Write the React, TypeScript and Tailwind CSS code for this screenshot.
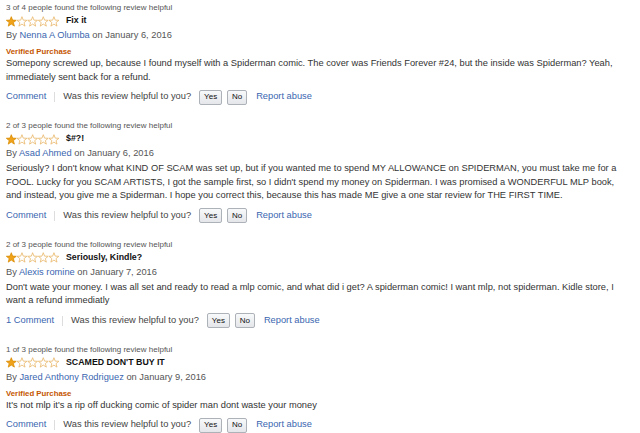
import React from 'react';

type Review = {
    helpful: string;
    title: string;
    author: string;
    date: string;
    verified: boolean;
    body: string;
    comments: string;
};

const reviews: Review[] = [
    {
        helpful: '3 of 4 people found the following review helpful',
        title: 'Fix it',
        author: 'Nenna A Olumba',
        date: 'January 6, 2016',
        verified: true,
        body: 'Somepony screwed up, because I found myself with a Spiderman comic. The cover was Friends Forever #24, but the inside was Spiderman? Yeah, immediately sent back for a refund.',
        comments: 'Comment',
    },
    {
        helpful: '2 of 3 people found the following review helpful',
        title: '$#?!',
        author: 'Asad Ahmed',
        date: 'January 6, 2016',
        verified: false,
        body: "Seriously? I don't know what KIND OF SCAM was set up, but if you wanted me to spend MY ALLOWANCE on SPIDERMAN, you must take me for a FOOL. Lucky for you SCAM ARTISTS, I got the sample first, so I didn't spend my money on Spiderman. I was promised a WONDERFUL MLP book, and instead, you give me a Spiderman. I hope you correct this, because this has made ME give a one star review for THE FIRST TIME.",
        comments: 'Comment',
    },
    {
        helpful: '2 of 3 people found the following review helpful',
        title: 'Seriously, Kindle?',
        author: 'Alexis romine',
        date: 'January 7, 2016',
        verified: false,
        body: "Don't wate your money. I was all set and ready to read a mlp comic, and what did i get? A spiderman comic! I want mlp, not spiderman. Kidle store, I want a refund immediatly",
        comments: '1 Comment',
    },
    {
        helpful: '1 of 3 people found the following review helpful',
        title: "SCAMED DON'T BUY IT",
        author: 'Jared Anthony Rodriguez',
        date: 'January 9, 2016',
        verified: true,
        body: "It's not mlp it's a rip off ducking comic of spider man dont waste your money",
        comments: 'Comment',
    },
];

function starPoints(cx: number, cy: number, ro: number, ri: number) {
    const pts: string[] = [];
    for (let i = 0; i < 10; i++) {
        const r = i % 2 === 0 ? ro : ri;
        const a = (Math.PI / 5) * i - Math.PI / 2;
        pts.push(`${(cx + r * Math.cos(a)).toFixed(2)},${(cy + r * Math.sin(a)).toFixed(2)}`);
    }
    return pts.join(' ');
}

function Stars({ rating }: { rating: number }) {
    return (
        <svg width="54" height="11" viewBox="0 0 54 11" className="shrink-0">
            {[0, 1, 2, 3, 4].map((i) => (
                <polygon
                    key={i}
                    points={starPoints(5.3 + i * 10.66, 5.9, 5.2, 2.2)}
                    fill={i < rating ? '#f0a31a' : '#ffffff'}
                    stroke={i < rating ? '#d98b00' : '#e8b667'}
                    strokeWidth="0.8"
                    strokeLinejoin="round"
                />
            ))}
        </svg>
    );
}

function ReviewItem({ r }: { r: Review }) {
    return (
        <div className="mb-[15px]">
            <div className="text-[8px] leading-[12px] text-[#555]">{r.helpful}</div>
            <div className="flex items-center h-[14px]">
                <Stars rating={1} />
                <span className="ml-[6px] text-[8.8px] font-bold text-[#111]">{r.title}</span>
            </div>
            <div className="text-[9.3px] leading-[14px] text-[#555]">
                By <a href="#" className="text-[#3a66b0]">{r.author}</a> on {r.date}
            </div>
            {r.verified && (
                <div className="mt-[4px] text-[7.8px] leading-[11px] font-bold text-[#c45500]">Verified Purchase</div>
            )}
            <p className={`text-[9.3px] leading-[13.5px] text-[#333] ${r.verified ? '' : 'mt-[2px]'}`}>{r.body}</p>
            <div className="mt-[5px] flex items-center h-[16px] text-[9.3px] text-[#444]">
                <a href="#" className="text-[#3a66b0]">{r.comments}</a>
                <span className="mx-[8px] w-px h-[10px] bg-[#ddd]" />
                <span>Was this review helpful to you?</span>
                <button type="button" className="ml-[8px] h-[15px] w-[23px] text-[8px] text-[#111] border border-[#adb1b8] rounded-[2px] bg-gradient-to-b from-[#f8f9fa] to-[#e4e6ea]">
                    Yes
                </button>
                <button type="button" className="ml-[5px] h-[15px] w-[20px] text-[8px] text-[#111] border border-[#adb1b8] rounded-[2px] bg-gradient-to-b from-[#f8f9fa] to-[#e4e6ea]">
                    No
                </button>
                <a href="#" className="ml-[9px] text-[#3a66b0]">Report abuse</a>
            </div>
        </div>
    );
}

export default function App() {
    return (
        <div className="min-h-screen bg-white pl-[6px] pr-[18px] pt-[2px] font-['Liberation_Sans',Arial,sans-serif]">
            {reviews.map((r, i) => (
                <ReviewItem key={i} r={r} />
            ))}
        </div>
    );
}
